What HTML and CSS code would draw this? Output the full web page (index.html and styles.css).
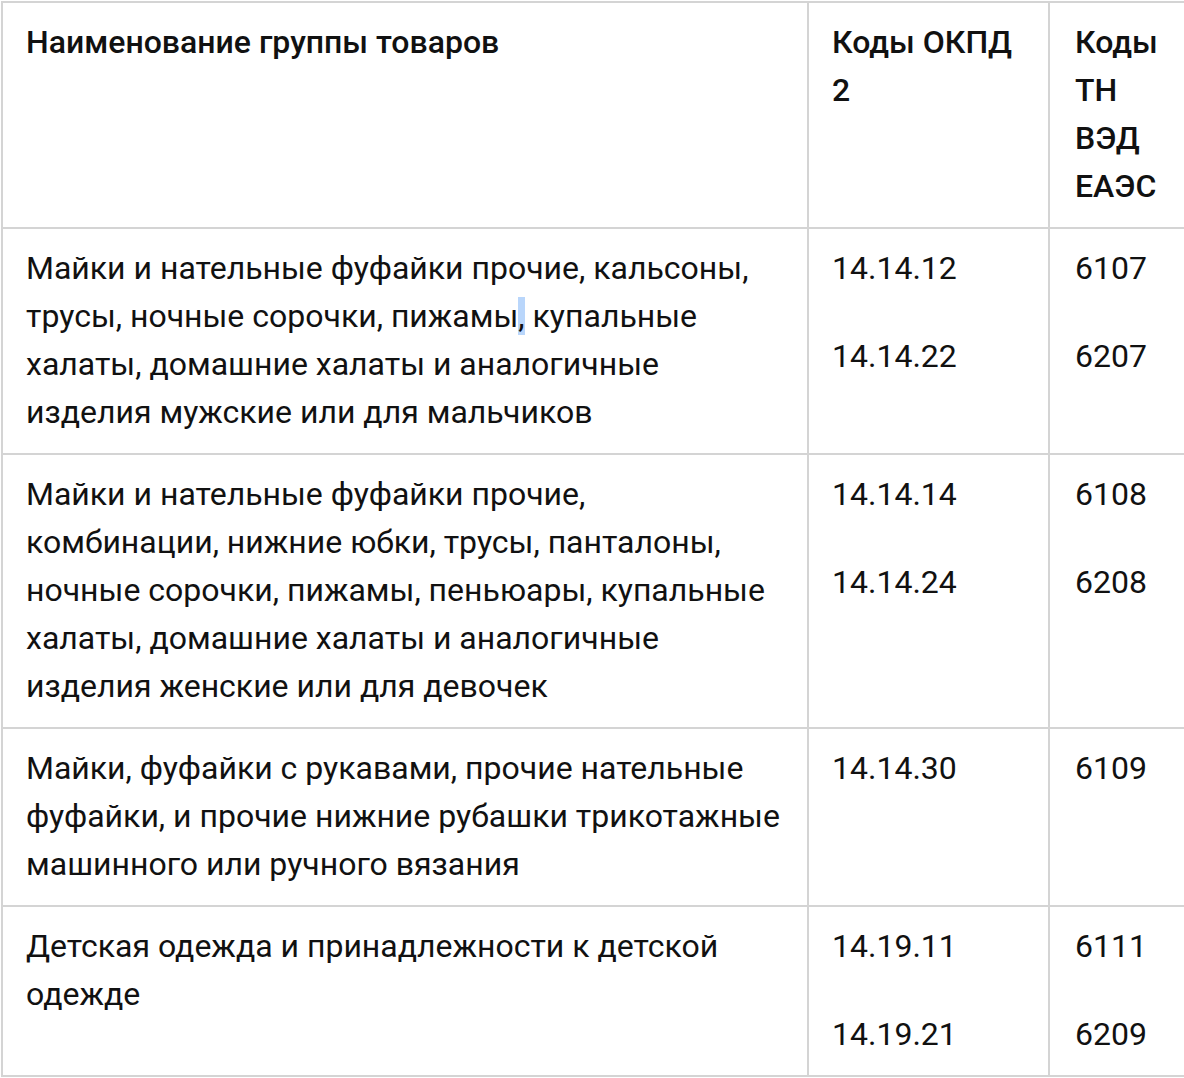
FILE: index.html
```html
<!DOCTYPE html>
<html lang="ru">
<head>
<meta charset="utf-8">
<link rel="stylesheet" href="styles.css">
</head>
<body>
<table class="goods">
  <colgroup>
    <col class="c-name">
    <col class="c-okpd">
    <col class="c-tnved">
  </colgroup>
  <thead>
    <tr>
      <th>Наименование группы товаров</th>
      <th>Коды ОКПД 2</th>
      <th class="last">Коды ТН ВЭД ЕАЭС</th>
    </tr>
  </thead>
  <tbody>
    <tr>
      <td>Майки и нательные фуфайки прочие, кальсоны, трусы, ночные сорочки, пижамы<span class="sel">,</span> купальные халаты, домашние халаты и аналогичные изделия мужские или для мальчиков</td>
      <td><p>14.14.12</p><p>14.14.22</p></td>
      <td class="last"><p>6107</p><p>6207</p></td>
    </tr>
    <tr>
      <td>Майки и нательные фуфайки прочие, комбинации, нижние юбки, трусы, панталоны, ночные сорочки, пижамы, пеньюары, купальные халаты, домашние халаты и аналогичные изделия женские или для девочек</td>
      <td><p>14.14.14</p><p>14.14.24</p></td>
      <td class="last"><p>6108</p><p>6208</p></td>
    </tr>
    <tr>
      <td>Майки, фуфайки с рукавами, прочие нательные фуфайки, и прочие нижние рубашки трикотажные машинного или ручного вязания</td>
      <td><p>14.14.30</p></td>
      <td class="last"><p>6109</p></td>
    </tr>
    <tr>
      <td>Детская одежда и принадлежности к детской одежде</td>
      <td><p>14.19.11</p><p>14.19.21</p></td>
      <td class="last"><p>6111</p><p>6209</p></td>
    </tr>
  </tbody>
</table>
</body>
</html>
```

FILE: styles.css
```css
html, body {
  margin: 0;
  padding: 0;
  background: #ffffff;
  overflow: hidden;
}

body {
  font-family: Roboto, "Liberation Sans", sans-serif;
  font-size: 32px;
  line-height: 48px;
  color: #111111;
}

.goods {
  margin: 1px 0 0 1px;
  width: 1183px;
  border-collapse: collapse;
  table-layout: fixed;
}

.c-name { width: 806px; }
.c-okpd { width: 241px; }
.c-tnved { width: 136px; }

.goods th,
.goods td {
  border: 2px solid #d4d4d4;
  vertical-align: top;
  text-align: left;
  padding: 15px 24px 17px 23px;
}

.goods .last {
  padding-left: 25px;
  padding-right: 12px;
}

.goods th {
  font-weight: 500;
}

.goods td p {
  margin: 0 0 40px;
}

.goods td p:last-child {
  margin-bottom: 0;
}

.sel {
  background: #b9d6fb;
}
```
